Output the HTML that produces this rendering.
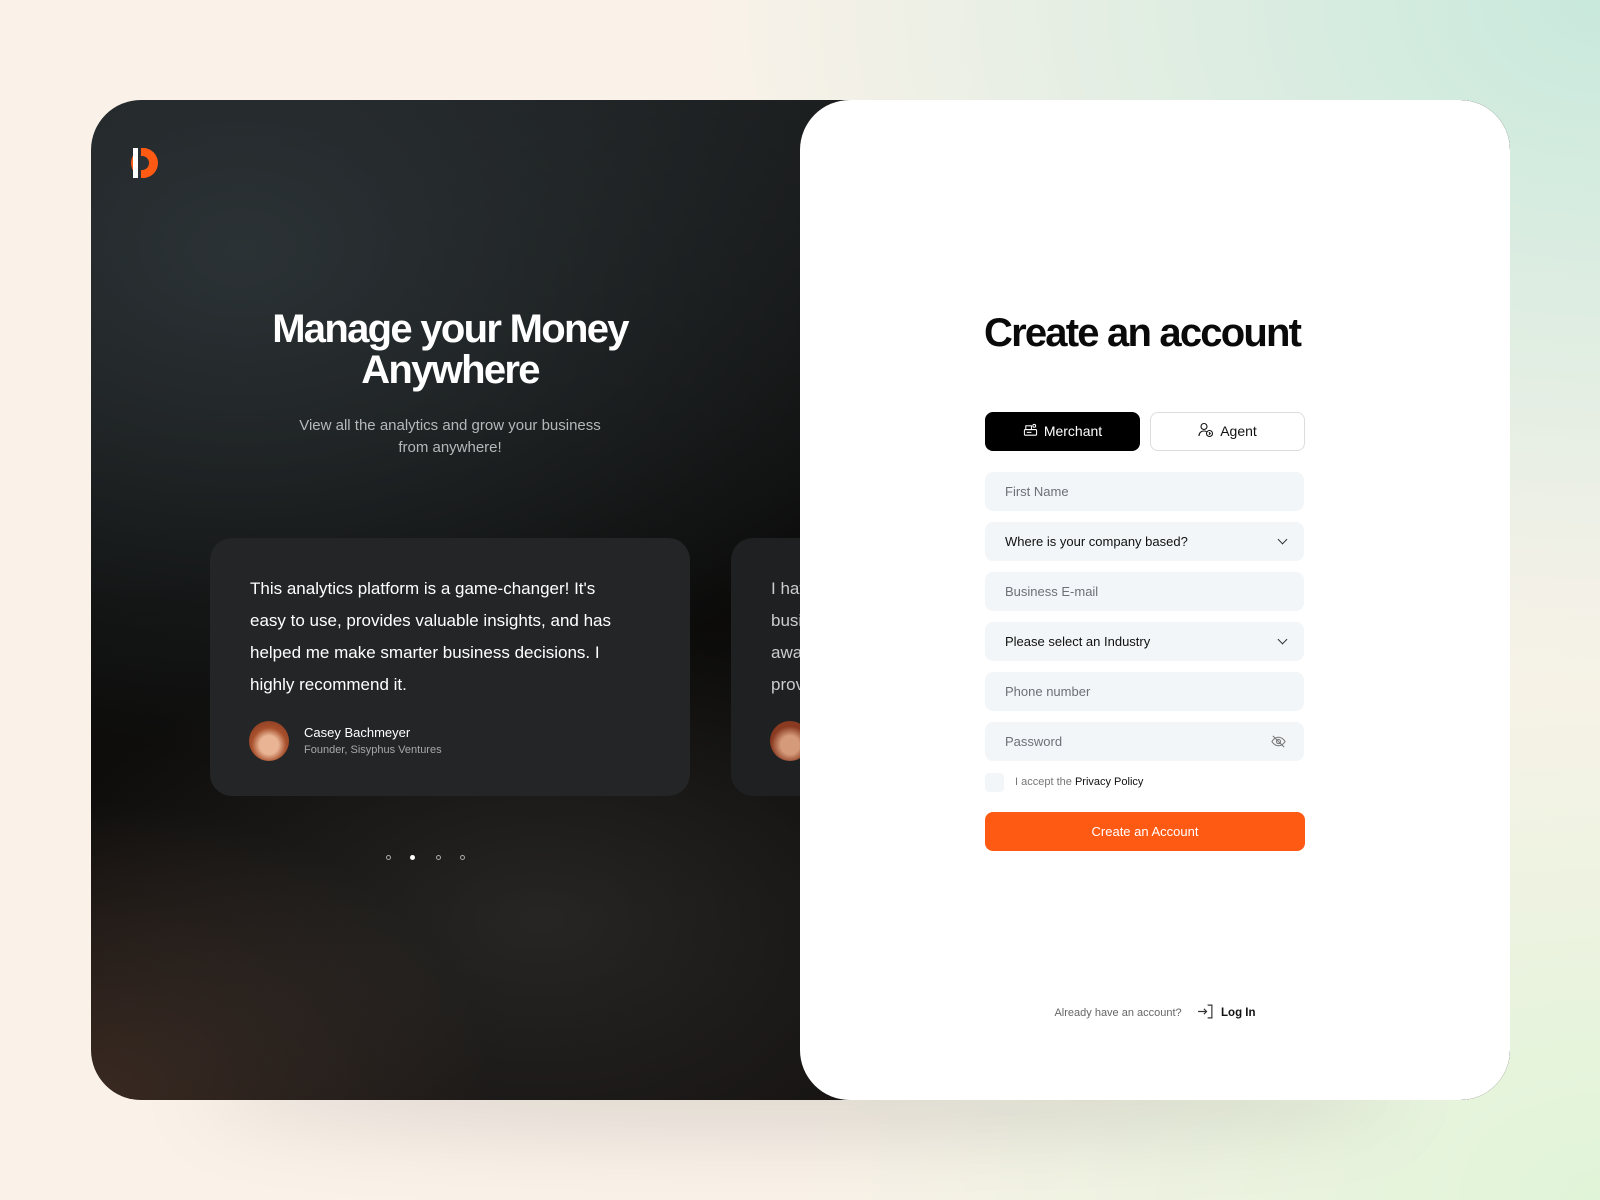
<!DOCTYPE html>
<html><head><meta charset="utf-8"><style>
*{box-sizing:border-box;margin:0;padding:0}
body{width:1600px;height:1200px;overflow:hidden;font-family:"Liberation Sans",sans-serif;position:relative;
background:radial-gradient(ellipse 900px 700px at 1600px 0,#c8e9dc,rgba(200,233,220,0) 100%),radial-gradient(ellipse 800px 600px at 1600px 1200px,#e0f4d8,rgba(224,244,216,0)),#faf2e9;}
.shadow{position:absolute;left:200px;top:1050px;width:1200px;height:80px;background:rgba(0,0,0,.12);filter:blur(40px);border-radius:50%}
.card{position:absolute;left:91px;top:100px;width:1419px;height:1000px;border-radius:50px;overflow:hidden;
background:radial-gradient(ellipse 500px 300px at 450px 820px,rgba(90,90,85,.3),rgba(0,0,0,0)),radial-gradient(ellipse 400px 300px at 0 1000px,#3a2a22,rgba(0,0,0,0)),radial-gradient(ellipse 700px 500px at 150px 150px,#2b3235,rgba(0,0,0,0)),linear-gradient(180deg,#1a1c1d,#0b0b0a 50%,#141110);}
.right{position:absolute;left:709px;top:0;width:710px;height:1000px;background:#fff;border-radius:50px}
.w{color:#fff}
.tc{position:absolute;left:119px;top:438px;width:480px;height:258px;border-radius:22px;background:#242527}
.tc2{position:absolute;left:640px;top:438px;width:480px;height:258px;border-radius:22px;background:#1f2021}
.field{position:absolute;left:185px;width:319px;height:39px;border-radius:8px;background:#f3f6f8;font-size:13px;color:#6b7177;padding-left:20px;line-height:39px}
.dark{color:#111}
.chev{position:absolute;right:18px;top:14px;width:7px;height:7px;border-right:1.3px solid #333;border-bottom:1.3px solid #333;transform:rotate(45deg)}
</style></head><body>
<div class="shadow"></div>
<div class="card">
 <div style="position:absolute;left:38px;top:48px;width:29px;height:30px">
  <div style="position:absolute;left:2px;top:0;width:15px;height:30px;border-radius:15px 0 0 15px;background:#ff5a14"></div>
  <div style="position:absolute;left:12px;top:0;width:17px;height:30px;border-radius:0 15px 15px 0;background:#ff5a14"></div>
  <div style="position:absolute;left:12px;top:8px;width:8px;height:14px;border-radius:0 7px 7px 0;background:#2a3033"></div>
  <div style="position:absolute;left:4px;top:0;width:5px;height:30px;background:#fff"></div>
  <div style="position:absolute;left:9px;top:0;width:3px;height:30px;background:#2a3033"></div>
 </div>
 <div class="w" style="position:absolute;left:0;width:718px;top:209px;text-align:center;font-size:40px;line-height:41px;letter-spacing:-1.7px;font-weight:bold">Manage your Money<br>Anywhere</div>
 <div style="position:absolute;left:0;width:718px;top:315px;text-align:center;font-size:15px;line-height:22px;color:#b5b8bb">View all the analytics and grow your business<br>from anywhere!</div>
 <div class="tc">
  <div class="w" style="position:absolute;left:40px;top:35px;width:375px;font-size:17px;line-height:32px">This analytics platform is a game-changer! It's easy to use, provides valuable insights, and has helped me make smarter business decisions. I highly recommend it.</div>
  <div style="position:absolute;left:39px;top:183px;width:40px;height:40px;border-radius:50%;background:radial-gradient(circle at 50% 60%,#e8b494 30%,#a8502c 55%,#7a3420)"></div>
  <div class="w" style="position:absolute;left:94px;top:187px;font-size:13px">Casey Bachmeyer</div>
  <div style="position:absolute;left:94px;top:206px;font-size:11px;color:#a5a8aa">Founder, Sisyphus Ventures</div>
 </div>
 <div class="tc2">
  <div style="position:absolute;left:40px;top:35px;width:400px;font-size:17px;line-height:32px;color:#ccc">I have<br>busi<br>awa<br>prov</div>
  <div style="position:absolute;left:39px;top:183px;width:40px;height:40px;border-radius:50%;background:radial-gradient(circle at 50% 60%,#d49a7a 30%,#8a3a20 60%)"></div>
 </div>
 <div style="position:absolute;top:755px;left:295px;width:5px;height:5px;border:1px solid #aaa;border-radius:50%"></div>
 <div style="position:absolute;top:755px;left:319px;width:5px;height:5px;background:#fff;border-radius:50%"></div>
 <div style="position:absolute;top:755px;left:345px;width:5px;height:5px;border:1px solid #aaa;border-radius:50%"></div>
 <div style="position:absolute;top:755px;left:369px;width:5px;height:5px;border:1px solid #aaa;border-radius:50%"></div>
 <div class="right">
  <div style="position:absolute;left:184px;top:211px;font-size:40px;letter-spacing:-1.8px;font-weight:bold;color:#0a0a0a">Create an account</div>
  <div style="position:absolute;left:185px;top:312px;width:155px;height:39px;border-radius:8px;background:#000;color:#fff;font-size:14px;line-height:39px;text-align:center">
   <svg width="15" height="15" viewBox="0 0 16 16" style="vertical-align:-2px;margin-right:6px" fill="none" stroke="#fff" stroke-width="1.1"><rect x="1.5" y="7" width="13" height="6" rx="1"/><rect x="3" y="3" width="6" height="4"/><circle cx="12" cy="3" r="1.5"/><path d="M4 10h5"/></svg>Merchant</div>
  <div style="position:absolute;left:350px;top:312px;width:155px;height:39px;border-radius:8px;border:1px solid #ddd;color:#111;font-size:14px;line-height:37px;text-align:center">
   <svg width="16" height="16" viewBox="0 0 16 16" style="vertical-align:-2px;margin-right:6px" fill="none" stroke="#111" stroke-width="1.1"><circle cx="6" cy="4.5" r="3"/><path d="M1 14c0-3 2-5 5-5 1 0 2 .3 2.5.7"/><circle cx="11.5" cy="11.5" r="3"/><path d="M11 10.3l1.2 1.2-1.2 1.2"/></svg>Agent</div>
  <div class="field" style="top:372px">First Name</div>
  <div class="field dark" style="top:422px">Where is your company based?<div class="chev"></div></div>
  <div class="field" style="top:472px">Business E-mail</div>
  <div class="field dark" style="top:522px">Please select an Industry<div class="chev"></div></div>
  <div class="field" style="top:572px">Phone number</div>
  <div class="field" style="top:622px">Password
   <svg width="15" height="15" viewBox="0 0 16 16" style="position:absolute;right:18px;top:12px" fill="none" stroke="#777" stroke-width="1.1"><path d="M1 8s2.5-4.5 7-4.5S15 8 15 8s-2.5 4.5-7 4.5S1 8 1 8z"/><circle cx="8" cy="8" r="2.2"/><path d="M2 2l12 12"/></svg></div>
  <div style="position:absolute;left:185px;top:673px;width:19px;height:19px;border-radius:4px;background:#f3f6f8"></div>
  <div style="position:absolute;left:215px;top:676px;font-size:11px;color:#777">I accept the <span style="color:#111">Privacy Policy</span></div>
  <div style="position:absolute;left:185px;top:712px;width:320px;height:39px;border-radius:8px;background:#ff5a14;color:#fff;font-size:13px;line-height:39px;text-align:center">Create an Account</div>
  <div style="position:absolute;left:0;width:710px;top:903px;text-align:center;font-size:11px;color:#666">Already have an account? &nbsp;&nbsp;&nbsp;
   <svg width="17" height="17" viewBox="0 0 16 16" style="vertical-align:-4px;margin-right:4px" fill="none" stroke="#333" stroke-width="1.1"><path d="M1 8h8M6.5 5.5L9 8l-2.5 2.5M10 2h4v12h-4"/></svg>
   <span style="color:#111;font-size:11.5px;font-weight:bold">Log In</span></div>
 </div>
</div>
</body></html>
